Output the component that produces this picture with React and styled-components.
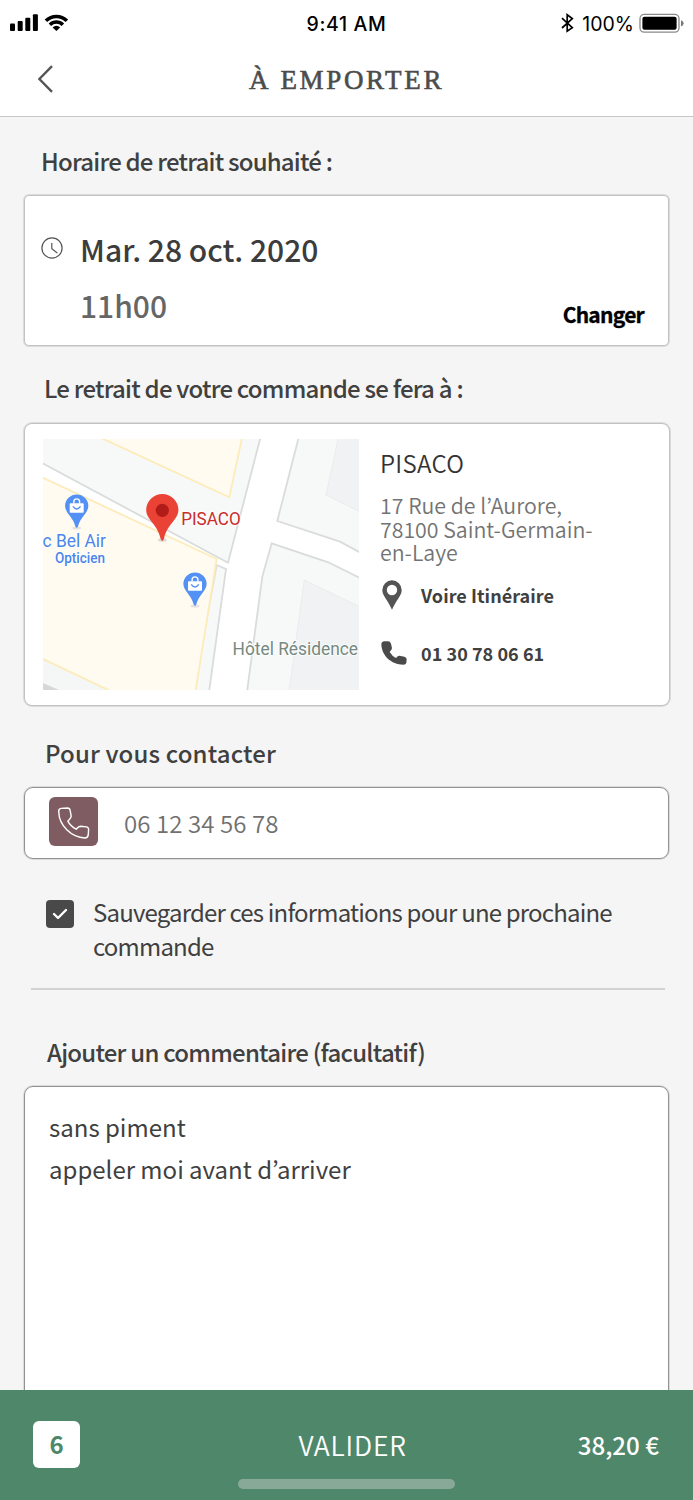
import React, { useState } from "react";
import styled, { createGlobalStyle } from "styled-components";

const App = () => {
  const [saveInfo, setSaveInfo] = useState(true);

  return (
    <>
      <GlobalStyle />
      <Screen>
        <StatusBar>
          <StatusSide>
            <SignalIcon />
          </StatusSide>
          <Time>9:41 AM</Time>
          <StatusSide $right>
            <BluetoothIcon />
            <Percent>100%</Percent>
            <BatteryIcon />
          </StatusSide>
        </StatusBar>

        <Header>
          <BackButton aria-label="Retour">
            <svg width="18" height="30" viewBox="0 0 18 30" fill="none">
              <path d="M15 2.2 L2.4 15 L15 27.8" stroke="#555" strokeWidth="2.4" />
            </svg>
          </BackButton>
          <Title>À EMPORTER</Title>
        </Header>

        <Content>
          <PickupHeading>Horaire de retrait souhaité :</PickupHeading>
          <TimeCard>
            <ClockIcon />
            <Slot>
              <SlotDate>Mar. 28 oct. 2020</SlotDate>
              <SlotHour>11h00</SlotHour>
            </Slot>
            <ChangeButton>Changer</ChangeButton>
          </TimeCard>

          <PlaceHeading>Le retrait de votre commande se fera à :</PlaceHeading>
          <PlaceCard>
            <StreetMap />
            <PlaceInfo>
              <PlaceName>PISACO</PlaceName>
              <Address>
                17 Rue de l’Aurore,
                <br />
                78100 Saint-Germain-
                <br />
                en-Laye
              </Address>
              <PlaceLink>
                <IconSlot>
                  <svg width="20" height="30" viewBox="0 0 20 30">
                    <path
                      d="M10 0.3 A9.7 9.7 0 0 0 0.3 10 C0.3 16 6 20 10 29.8 C14 20 19.7 16 19.7 10 A9.7 9.7 0 0 0 10 0.3 Z M10 4.8 a5.2 5.2 0 1 1 0 10.4 a5.2 5.2 0 1 1 0 -10.4 Z"
                      fill="#545454"
                      fillRule="evenodd"
                    />
                  </svg>
                </IconSlot>
                Voire Itinéraire
              </PlaceLink>
              <PlaceLink $phone>
                <IconSlot $phone>
                  <svg width="26" height="24" viewBox="64 646 78 72">
                    <path
                      d="M65 654 Q66 648 73 647 L85 647 Q92 647 94 654 L97 668 Q97 672 90 679 Q97 691 109 697 Q115 689 120 690 L134 693 Q141 695 141 701 L140 711 Q139 717 131 717 C95 716 65 690 65 654 Z"
                      fill="#4a4a4a"
                    />
                  </svg>
                </IconSlot>
                01 30 78 06 61
              </PlaceLink>
            </PlaceInfo>
          </PlaceCard>

          <ContactHeading>Pour vous contacter</ContactHeading>
          <PhoneField>
            <PhoneTile>
              <svg width="49" height="49" viewBox="116 201 146 146" fill="none">
                <path
                  d="M145 245 Q144 236 152 235 L171 234 Q178 234 179 241 L182 258 Q182 263 172 273 Q180 288 197 297 Q204 288 210 288 L227 290 Q234 291 234 298 L233 314 Q232 323 223 323 C182 321 146 286 145 245 Z"
                  stroke="#fff"
                  strokeWidth="4.2"
                  strokeLinejoin="round"
                />
              </svg>
            </PhoneTile>
            <PhoneNumber>06 12 34 56 78</PhoneNumber>
          </PhoneField>

          <SaveRow>
            <Checkbox
              role="checkbox"
              aria-checked={saveInfo}
              onClick={() => setSaveInfo(!saveInfo)}
            >
              {saveInfo && (
                <svg width="16" height="12" viewBox="0 0 16 12" fill="none">
                  <path
                    d="M2 6 L6 10 L14 2"
                    stroke="#fff"
                    strokeWidth="2.4"
                    strokeLinecap="round"
                    strokeLinejoin="round"
                  />
                </svg>
              )}
            </Checkbox>
            <SaveLabel>
              Sauvegarder ces informations pour une prochaine
              <br />
              commande
            </SaveLabel>
          </SaveRow>
          <Divider />

          <CommentHeading>Ajouter un commentaire (facultatif)</CommentHeading>
          <CommentBox>
            sans piment
            <br />
            appeler moi avant d’arriver
          </CommentBox>
        </Content>

        <Footer>
          <FooterRow>
            <Count>6</Count>
            <Validate>VALIDER</Validate>
            <Price>38,20 €</Price>
          </FooterRow>
          <HomeBar />
        </Footer>
      </Screen>
    </>
  );
};

const SignalIcon = () => (
  <svg width="60" height="20" viewBox="9 13 60 20">
    <rect x="10" y="23.4" width="5" height="7.6" rx="1" />
    <rect x="17.7" y="21" width="5" height="10" rx="1" />
    <rect x="25.3" y="17.8" width="5" height="13.2" rx="1" />
    <rect x="32.9" y="14.3" width="5" height="16.7" rx="1" />
    <g fill="none" stroke="#000" strokeWidth="3.5">
      <path d="M45.9 20.7 A15 15 0 0 1 66.9 20.7" />
      <path d="M49.9 24.7 A9.3 9.3 0 0 1 62.9 24.7" />
    </g>
    <path d="M56.4 31 L52.6 27.4 A5.4 5.4 0 0 1 60.2 27.4 Z" />
  </svg>
);

const BluetoothIcon = () => (
  <svg width="14" height="20" viewBox="560 13 14 20" fill="none">
    <path
      d="M562 18.2 L572.3 27.6 L567.2 31.2 V14.8 L572.3 18.6 L562 28"
      stroke="#000"
      strokeWidth="1.7"
    />
  </svg>
);

const BatteryIcon = () => (
  <svg width="46" height="20" viewBox="639 13 46 20">
    <rect
      x="640"
      y="14.4"
      width="39"
      height="17.8"
      rx="4.2"
      fill="none"
      stroke="#8a8a8a"
      strokeWidth="1.3"
    />
    <rect x="642.4" y="16.8" width="34.2" height="13" rx="2" />
    <path d="M681 20.2 Q683.6 21 683.6 23.3 Q683.6 25.6 681 26.4 Z" fill="#777" />
  </svg>
);

const ClockIcon = () => (
  <Clock width="22" height="22" viewBox="0 0 22 22" fill="none" stroke="#555">
    <circle cx="11" cy="11" r="10.1" strokeWidth="1.2" />
    <path d="M10.8 6 V11.8 L16.3 16" strokeWidth="1.2" />
  </Clock>
);

const ShopPin = ({ x, y }) => (
  <g transform={`translate(${x} ${y})`}>
    <ellipse cx="0" cy="22" rx="4.5" ry="1.6" fill="#e4e2db" />
    <path
      d="M0 -11.6 A11.6 11.6 0 0 0 -11.6 0 C-11.6 7 -3.5 11 -1.3 20.5 Q0 23 1.3 20.5 C3.5 11 11.6 7 11.6 0 A11.6 11.6 0 0 0 0 -11.6 Z"
      fill="#5491f5"
    />
    <path d="M-2.9 -2.5 V-4.2 A2.9 2.9 0 0 1 2.9 -4.2 V-2.5" fill="none" stroke="#fff" strokeWidth="1.4" />
    <rect x="-7" y="-2.8" width="14" height="9.6" rx="0.8" fill="#fff" />
    <path d="M-3.8 0.4 Q0 5.6 3.8 0.4" fill="none" stroke="#5491f5" strokeWidth="1.5" />
  </g>
);

const StreetMap = () => (
  <MapSvg width="316" height="251" viewBox="0 0 316 251">
    <rect width="317" height="251" fill="#fff" />
    {/* city blocks */}
    <g fill="#f7f9f9" stroke="#d9dcdb" strokeWidth="1.8">
      <path d="M-2 -2 H217.6 L185 123.7 L-2 23.4 Z" />
      <path d="M255.8 -2 L234.3 82 L297 102.7 L319 114.5 V-2 Z" />
      <path d="M228.7 104.3 L285.3 123.3 L319 140 V253 H204 L219.3 137.7 Z" />
      <path d="M173.7 126 L183 130 L166 253 H150 Z" />
    </g>
    <path d="M0 220 L65.3 251 H0 Z" fill="#f5f7f7" />
    <path d="M0 244 L16 251 H0 Z" fill="#d6d8d8" />
    {/* buildings */}
    <g fill="#f1f2f4" stroke="#e9ebec" strokeWidth="1">
      <path d="M295.6 -2 L283 56 L319 73.8 V-2 Z" />
      <path d="M261.3 141 L319 169 V253 H246 Z" />
    </g>
    <g fill="#fffbf0" stroke="#fdebba" strokeWidth="1.8">
      <path d="M56 -2 L186.3 58.3 L199.2 -2 Z" />
      <path d="M-2 37.8 L173.7 120 L152.4 253 H69.5 L-2 219 Z" />
    </g>
    <ShopPin x={33.7} y={67} />
    <ShopPin x={152} y={145} />
    <ellipse cx="119.3" cy="101" rx="4.5" ry="1.8" fill="#dcdad3" />
    <path
      d="M119.3 55 A16.1 16.1 0 0 0 103.2 71.1 C103.2 81 114.5 85 117.6 99.8 Q119.3 104 121 99.8 C124.1 85 135.4 81 135.4 71.1 A16.1 16.1 0 0 0 119.3 55 Z"
      fill="#ea4335"
    />
    <circle cx="119.3" cy="71.3" r="6.6" fill="#b11b18" />
    <MapLabel x="138.2" y="86.2" textLength="59.5" lengthAdjust="spacingAndGlyphs" fill="#c92d2b">
      PISACO
    </MapLabel>
    <MapLabel x="-0.5" y="108.4" textLength="63.5" lengthAdjust="spacingAndGlyphs" fill="#4a86ea">
      c Bel Air
    </MapLabel>
    <MapLabel x="12" y="124" textLength="50" lengthAdjust="spacingAndGlyphs" fill="#4a86ea" $small>
      Opticien
    </MapLabel>
    <MapLabel x="189.6" y="216" textLength="125.4" lengthAdjust="spacingAndGlyphs" fill="#75897f">
      Hôtel Résidence
    </MapLabel>
  </MapSvg>
);

const GlobalStyle = createGlobalStyle`
  * {
    box-sizing: border-box;
  }
  body {
    margin: 0;
    background: #f5f5f5;
    font-family: "Noto Sans CJK KR", "Noto Sans", sans-serif;
    color: #404040;
  }
  button {
    border: none;
    background: none;
    padding: 0;
    font-family: inherit;
  }
  svg {
    display: block;
    flex: none;
  }
`;

const Screen = styled.div`
  display: flex;
  flex-direction: column;
  width: 693px;
  height: 1500px;
  overflow: hidden;
  background: #f5f5f5;
`;
const StatusBar = styled.div`
  display: grid;
  grid-template-columns: 1fr auto 1fr;
  align-items: center;
  height: 46px;
  padding: 0 8px 0 9px;
  background: #fff;
  color: #000;
  font-family: Inter, sans-serif;
  font-size: 19.5px;
`;
const StatusSide = styled.div`
  display: flex;
  align-items: center;
  justify-content: ${(p) => (p.$right ? "flex-end" : "flex-start")};
`;
const Time = styled.span`
  padding: 2px 1px 0 0;
  font-weight: 500;
  letter-spacing: 0.65px;
  line-height: 24px;
`;
const Percent = styled.span`
  margin: 2px 5px 0 8px;
  line-height: 24px;
`;
const Header = styled.header`
  display: grid;
  grid-template-columns: 80px 1fr 80px;
  align-items: center;
  height: 71px;
  background: #fff;
  border-bottom: 1px solid #c9c4c6;
  padding-bottom: 3px;
`;
const BackButton = styled.button`
  padding: 0 0 2px 37px;
`;
const Title = styled.h1`
  margin: 0;
  text-align: center;
  font-family: "Liberation Serif", serif;
  font-size: 27px;
  font-weight: 400;
  line-height: 36px;
  letter-spacing: 2.65px;
  color: #4c4c4c;
  -webkit-text-stroke: 0.6px #4c4c4c;
`;
const Content = styled.main`
  flex: 1;
  min-height: 0;
  overflow: hidden;
  padding: 26px 24px 0;
`;
const Heading = styled.h2`
  margin: 0;
  font-size: 24px;
  font-weight: 500;
  line-height: 36px;
  white-space: nowrap;
`;
const PickupHeading = styled(Heading)`
  padding-left: 17px;
  letter-spacing: -0.8px;
`;
const PlaceHeading = styled(Heading)`
  margin-top: 24px;
  padding-left: 20px;
  letter-spacing: -0.78px;
`;
const ContactHeading = styled(Heading)`
  margin-top: 29px;
  padding-left: 21px;
  letter-spacing: 0.15px;
`;
const CommentHeading = styled(Heading)`
  margin-top: 44px;
  padding-left: 23px;
  letter-spacing: -0.76px;
`;
const Card = styled.section`
  display: flex;
  background: #fff;
  border: 1px solid #c2c2c2;
  box-shadow: 0 0 0 1px rgba(0, 0, 0, 0.1);
`;
const TimeCard = styled(Card)`
  height: 151px;
  margin-top: 16px;
  padding: 32px 24px 0 16px;
  border-radius: 5px;
`;
const Clock = styled.svg`
  margin-top: 9px;
`;
const Slot = styled.div`
  flex: 1;
  padding-left: 17px;
  font-size: 30px;
  font-weight: 500;
  white-space: nowrap;
`;
const SlotDate = styled.div`
  line-height: 42px;
  color: #3c3c3c;
`;
const SlotHour = styled.div`
  margin-top: 14px;
  line-height: 42px;
  color: #666;
`;
const ChangeButton = styled.button`
  align-self: flex-end;
  margin-bottom: 15px;
  font-size: 21px;
  font-weight: 700;
  line-height: 32px;
  letter-spacing: -0.75px;
  color: #000;
  -webkit-text-stroke: 0.3px #000;
`;
const PlaceCard = styled(Card)`
  height: 283px;
  margin: 17px -1px 0 0;
  padding: 15px 18px 0;
  border-radius: 8px;
`;
const MapSvg = styled.svg`
  overflow: hidden;
`;
const MapLabel = styled.text`
  font-family: Roboto, sans-serif;
  font-size: ${(p) => (p.$small ? "13.8px" : "17.6px")};
  font-weight: ${(p) => (p.$small ? 500 : 400)};
  paint-order: stroke;
  stroke: rgba(255, 255, 255, 0.8);
  stroke-width: 2px;
`;
const PlaceInfo = styled.div`
  padding-left: 21px;
  white-space: nowrap;
`;
const PlaceName = styled.div`
  padding-top: 6px;
  font-size: 24px;
  font-weight: 350;
  line-height: 36px;
  letter-spacing: 0.3px;
  color: #333;
`;
const Address = styled.div`
  margin-top: 12px;
  font-size: 21.3px;
  font-weight: 350;
  line-height: 23.5px;
  color: #737373;
`;
const PlaceLink = styled.div`
  display: flex;
  align-items: center;
  height: 30px;
  margin-top: ${(p) => (p.$phone ? "28px" : "16px")};
  font-size: 18px;
  font-weight: 700;
  line-height: 30px;
  letter-spacing: 0.05px;
`;
const IconSlot = styled.span`
  width: 41px;
  padding-left: ${(p) => (p.$phone ? "1px" : "2px")};
`;
const PhoneField = styled(Card)`
  align-items: flex-start;
  height: 72px;
  margin-top: 16px;
  padding: 9px 24px 0;
  border-color: #929292;
  border-radius: 9px;
`;
const PhoneTile = styled.span`
  width: 49px;
  height: 49px;
  border-radius: 6px;
  background: #7f5c62;
`;
const PhoneNumber = styled.span`
  padding: 8px 0 0 26px;
  font-size: 24px;
  font-weight: 350;
  line-height: 36px;
  letter-spacing: 0.1px;
  color: #707070;
`;
const SaveRow = styled.label`
  display: flex;
  align-items: flex-start;
  margin-top: 36px;
  padding-left: 22px;
`;
const Checkbox = styled.span`
  display: flex;
  flex: none;
  align-items: center;
  justify-content: center;
  width: 28px;
  height: 28px;
  margin-top: 5px;
  border-radius: 4px;
  background: #494949;
`;
const SaveLabel = styled.span`
  padding-left: 19px;
  font-size: 24px;
  font-weight: 400;
  line-height: 33.5px;
  letter-spacing: -0.82px;
  white-space: nowrap;
`;
const Divider = styled.hr`
  height: 2px;
  margin: 26px 4px 0 7px;
  border: none;
  background: #d2d2d2;
`;
const CommentBox = styled(Card)`
  display: block;
  height: 400px;
  margin-top: 16px;
  padding: 19px 24px;
  border-color: #929292;
  border-radius: 9px;
  font-size: 24px;
  line-height: 42px;
`;
const Footer = styled.footer`
  display: flex;
  flex: none;
  flex-direction: column;
  align-items: center;
  height: 110px;
  background: #4f876b;
  color: #fff;
`;
const FooterRow = styled.div`
  display: grid;
  grid-template-columns: 1fr auto 1fr;
  align-items: center;
  width: 100%;
  height: 89px;
  padding: 20px 34px 0 33px;
`;
const Count = styled.span`
  width: 47px;
  height: 47px;
  border-radius: 6px;
  background: #fff;
  color: #4f876b;
  font-size: 24px;
  font-weight: 700;
  line-height: 45px;
  text-align: center;
`;
const Validate = styled.button`
  padding: 1px 0 0 13px;
  color: #fff;
  font-size: 26.5px;
  font-weight: 350;
  line-height: 40px;
  letter-spacing: 0.8px;
`;
const Price = styled.span`
  justify-self: end;
  padding-top: 1px;
  font-size: 24.1px;
  font-weight: 500;
  line-height: 40px;
`;
const HomeBar = styled.div`
  width: 217px;
  height: 10px;
  border-radius: 5px;
  background: #88a998;
`;

export default App;
